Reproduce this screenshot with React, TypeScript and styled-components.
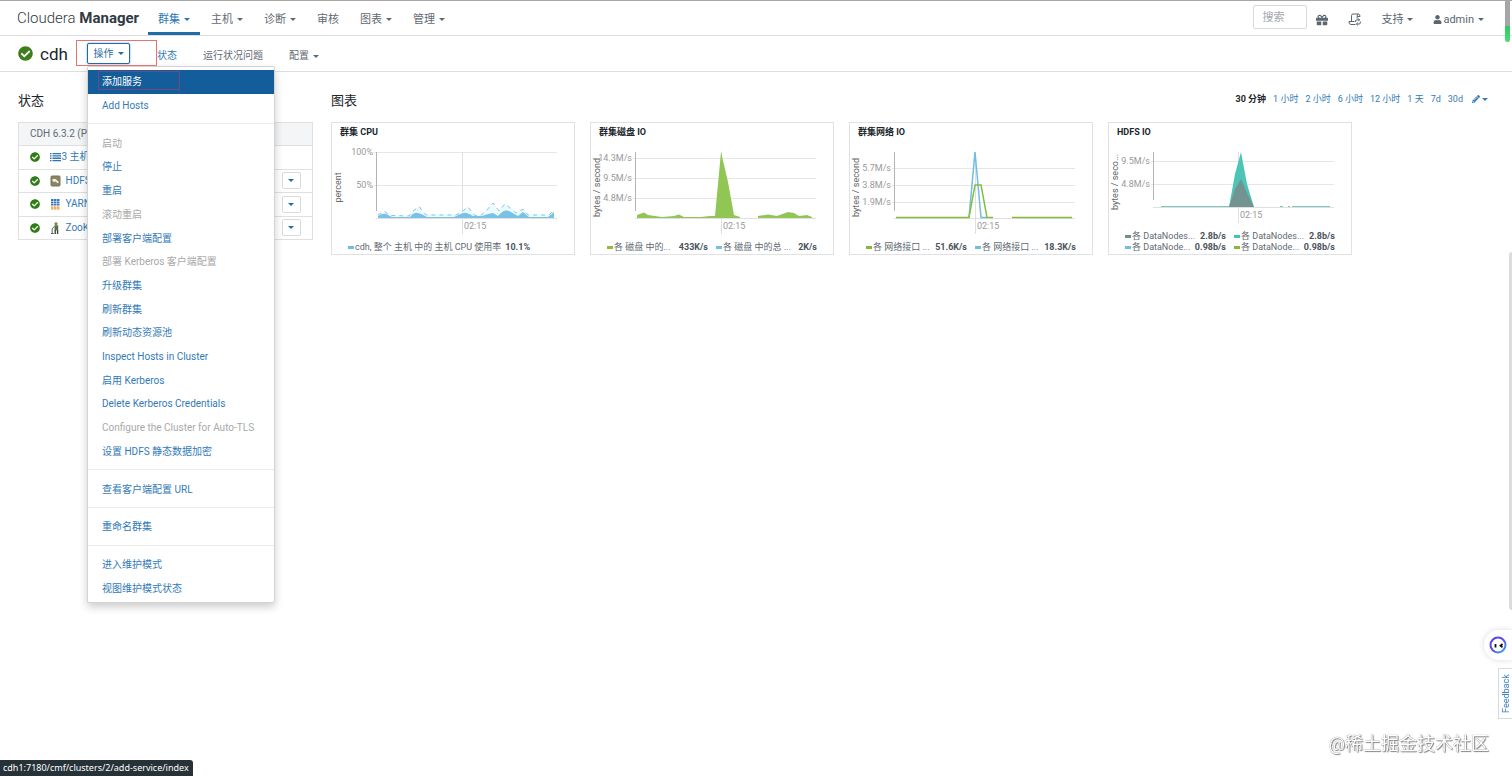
import React from 'react';
import styled, { createGlobalStyle, css } from 'styled-components';
import { FaCheckCircle, FaGift, FaUser, FaPencilAlt } from 'react-icons/fa';

const GlobalStyle = createGlobalStyle`
  * { box-sizing: border-box; }
  html, body { margin: 0; background: #fff; }
  body {
    font-family: Roboto, "Noto Sans CJK SC", sans-serif;
    font-size: 11px;
    line-height: 16px;
    color: #5f6a73;
    overflow-x: hidden;
  }
  button, input { font: inherit; color: inherit; }
  a { color: #337ab7; text-decoration: none; }
  h1, h2, h3, ul, p { margin: 0; padding: 0; font-weight: 400; }
  ul { list-style: none; }
`;

const Page = styled.div`
  position: relative;
  min-height: 100vh;
  border-top: 1px solid #a6a6a6;
`;

const TopBar = styled.header`
  display: flex;
  align-items: stretch;
  height: 35px;
  padding: 0 28px 0 17px;
  border-bottom: 1px solid #dedede;
`;

const Brand = styled.a`
  width: 131px;
  font-size: 15px;
  line-height: 35px;
  font-weight: 300;
  color: #2f3a44;
  white-space: nowrap;
  b { font-weight: 700; }
`;

const MainNav = styled.nav`
  display: flex;
  gap: 1px;
  flex: 1;
`;

const NavLink = styled.a<{ $active?: boolean }>`
  display: flex;
  align-items: center;
  gap: 4px;
  padding: 6px 10px 0;
  color: ${p => (p.$active ? '#2a76b4' : '#5f6a73')};
  border-bottom: 3px solid ${p => (p.$active ? '#1f6ca6' : 'transparent')};
`;

const Caret = styled.span`
  border: 3px solid transparent;
  border-top-color: currentColor;
  border-bottom-width: 0;
`;

const Tools = styled.div`
  display: flex;
  align-items: center;
  gap: 20px;
`;

const SearchBox = styled.input`
  width: 54px;
  height: 24px;
  margin: 0 -11px 2px 0;
  padding: 0 8px;
  border: 1px solid #d8dadc;
  border-radius: 2px;
  &::placeholder { color: #a3a8ad; }
`;

const ToolLink = styled.a`
  display: flex;
  align-items: center;
  gap: 4px;
  padding-top: 3px;
  color: #5a6670;
`;

const UserLabel = styled.span`
  display: flex;
  align-items: center;
  gap: 1px;
`;

const SubBar = styled.div`
  display: flex;
  align-items: center;
  height: 36px;
  padding-left: 18px;
  border-bottom: 1px solid #dedede;
`;

const ClusterName = styled.h1`
  display: flex;
  align-items: center;
  gap: 7px;
  width: 69px;
  font-size: 17px;
  color: #20262b;
  svg { color: #3e7d1c; font-size: 15px; }
`;

const ActionButton = styled.button`
  display: flex;
  align-items: center;
  justify-content: center;
  gap: 4px;
  width: 43px;
  height: 21px;
  padding: 0;
  font-size: 10px;
  color: #1f6ca6;
  background: #fff;
  border: 1px solid #1f6ca6;
  border-radius: 2px;
  box-shadow: 0 0 2px #5b9bd0;
`;

const SubNav = styled.nav`
  display: flex;
  gap: 26px;
  margin-left: 27px;
  padding-top: 5px;
`;

const SubLink = styled.a<{ $active?: boolean }>`
  display: flex;
  align-items: center;
  gap: 4px;
  font-size: 10px;
  color: ${p => (p.$active ? '#337ab7' : '#5f6a73')};
`;

const Content = styled.main`
  display: grid;
  grid-template-columns: 295px minmax(0, 1fr);
  gap: 18px;
  padding: 19px 24px 24px 18px;
`;

const SectionHead = styled.div`
  display: flex;
  justify-content: space-between;
  align-items: center;
  height: 20px;
  margin-bottom: 11px;
`;

const SectionTitle = styled.h2`
  font-size: 13px;
  color: #20262b;
`;

const ServiceTable = styled.table`
  width: 100%;
  height: 118px;
  border-collapse: collapse;
  border: 1px solid #e0e0e0;
  font-size: 10px;
  tr { height: 23px; border-bottom: 1px solid #e0e0e0; }
  th {
    padding: 0 11px;
    text-align: left;
    font-weight: 400;
    background: #f3f5f6;
  }
  td { padding: 0; }
`;

const StatusCell = styled.td`
  width: 31px;
  svg { display: block; margin-left: 11px; color: #2f7d14; font-size: 10px; }
`;

const ServiceLink = styled.a<{ $tight?: boolean }>`
  display: flex;
  align-items: center;
  gap: ${p => (p.$tight ? '1px' : '5px')};
`;

const MenuCell = styled.td`
  width: 37px;
`;

const RowMenu = styled.button`
  display: grid;
  place-items: center;
  width: 19px;
  height: 17px;
  margin-left: 6px;
  padding: 0;
  color: #1f6ca6;
  background: #fff;
  border: 1px solid #d8dadc;
  border-radius: 2px;
`;

const Ranges = styled.div`
  display: flex;
  align-items: center;
  gap: 7px;
  font-size: 9px;
  line-height: 12px;
  margin-top: -4px;
  b { color: #20262b; }
`;

const EditLink = styled.a`
  display: flex;
  align-items: center;
  gap: 2px;
  margin-left: 2px;
`;

const Charts = styled.div`
  display: grid;
  grid-template-columns: repeat(auto-fill, 244px);
  gap: 15px;
`;

const Panel = styled.section`
  display: flex;
  flex-direction: column;
  height: 133px;
  padding: 3px 0 1px;
  border: 1px solid #dfe1e2;
`;

const PanelTitle = styled.h3`
  margin-bottom: 1px;
  padding-left: 8px;
  font-size: 9px;
  line-height: 12px;
  font-weight: 700;
  color: #20262b;
`;

const Plot = styled.svg`
  display: block;
  width: 242px;
  flex: 1;
  min-height: 0;
  font-size: 9px;
  fill: #999;
`;

const Legend = styled.ul`
  display: grid;
  grid-template-columns: 101px 101px;
  column-gap: 8px;
  padding-left: 16px;
  font-size: 9px;
  line-height: 11px;
`;

const LegendItem = styled.li<{ $wide?: boolean }>`
  display: flex;
  align-items: center;
  white-space: nowrap;
  ${p => p.$wide && css`grid-column: 1 / -1;`}
  span { flex: ${p => (p.$wide ? 'none' : '1')}; }
  b { margin-left: 4px; color: #4a545c; }
`;

const Swatch = styled.i<{ $color: string }>`
  width: 6px;
  height: 3px;
  margin-right: 1px;
  background: ${p => p.$color};
`;

const Menu = styled.ul`
  position: absolute;
  z-index: 3;
  top: 65px;
  left: 87px;
  display: flex;
  flex-direction: column;
  width: 188px;
  height: 537px;
  padding: 3px 0 2px;
  font-size: 10px;
  background: #fff;
  border: 1px solid #d4d4d4;
  border-radius: 2px;
  box-shadow: 0 4px 8px rgba(0, 0, 0, 0.2);
`;

const MenuItem = styled.li`
  flex: 1;
  display: flex;
`;

const MenuLink = styled.a<{ $state?: 'on' | 'off' }>`
  display: flex;
  align-items: center;
  width: 100%;
  padding: 1px 0 0 14px;
  white-space: nowrap;
  color: ${p => (p.$state === 'on' ? '#fff' : p.$state === 'off' ? '#a9a9a9' : '#337ab7')};
  background: ${p => (p.$state === 'on' ? '#135d9b' : 'transparent')};
`;

const Divider = styled.li`
  height: 1px;
  margin: 6px 0 7px;
  background: #ececec;
`;

const Mark = styled.div<{ $inner?: boolean }>`
  position: absolute;
  z-index: 4;
  pointer-events: none;
  ${p => p.$inner
    ? css`top: 70px; left: 98px; width: 82px; height: 19px; border: 1px solid #6d4a80;`
    : css`top: 39px; left: 76px; width: 81px; height: 26px; border: 1px solid #e57373;`}
`;

const Watermark = styled.p`
  position: fixed;
  right: 23px;
  bottom: 19px;
  font-size: 18px;
  line-height: 26px;
  color: #fff;
  text-shadow: 0 0 1px #666, 1px 1px 1px #888;
`;

const LinkStatus = styled.div`
  position: fixed;
  left: 0;
  bottom: 0;
  height: 16px;
  padding: 0 4px 0 3px;
  font-family: "Noto Sans", sans-serif;
  font-size: 9px;
  line-height: 16px;
  color: #fff;
  background: #263238;
  border-top-right-radius: 3px;
`;

const Bot = styled.button`
  position: fixed;
  right: 0;
  bottom: 116px;
  width: 28px;
  height: 30px;
  padding: 0 0 0 5px;
  border: 0;
  border-radius: 15px 0 0 15px;
  background: #fff;
  box-shadow: 0 0 6px rgba(0, 0, 0, 0.14);
  svg { display: block; }
`;

const Feedback = styled.a`
  position: fixed;
  right: 0;
  bottom: 57px;
  width: 14px;
  height: 51px;
  writing-mode: vertical-rl;
  transform: rotate(180deg);
  text-align: center;
  font-size: 9px;
  line-height: 14px;
  background: #fff;
  border: 1px solid #d5d9dc;
  border-left: 0;
`;

const Thumb = styled.div<{ $green?: boolean }>`
  position: fixed;
  z-index: 5;
  ${p => p.$green
    ? css`top: 1px; right: 2px; width: 5px; height: 41px; border-radius: 0 0 3px 3px;
        background: linear-gradient(#a6a6a6 25px, #2fc862 25px, #4cdc78);`
    : css`top: 252px; right: 0; width: 3px; height: 358px; border-radius: 3px 0 0 3px; background: #dcdcdc;`}
`;

const ScriptIcon = () => (
  <svg width="13" height="13" viewBox="0 0 13 13" fill="none" stroke="#5a6670" strokeWidth="1">
    <path d="M3.5 8.5V2.5Q3.5 1 5 1H10.5Q9.2 1.2 9.2 3V5.5M10.5 1Q12 1.2 12 3.5H9.3M6.5 8.5H1Q.8 11.5 3 11.5H7.5" />
    <path d="M7.5 9V8Q7.5 6.8 9 6.8H11.5M10.2 5.5L11.7 6.8 10.2 8M12.3 8.5V10Q12.3 11 11 11H8.5M9.8 9.6L8.3 11 9.8 12.4" />
  </svg>
);

const ListIcon = () => (
  <svg width="11" height="10" viewBox="0 0 11 10" fill="#2a76b4">
    <path d="M0 1h1.500v1.300H0zM0 3.300h1.500v1.300H0zM0 5.600h1.500v1.300H0zM0 7.900h1.500v1.300H0z" />
    <path d="M2.500 1H11v1.300H2.500zM2.500 3.300H11v1.300H2.500zM2.500 5.600H11v1.300H2.500zM2.500 7.900H11v1.300H2.500z" />
  </svg>
);

const HdfsIcon = () => (
  <svg width="11" height="12" viewBox="0 0 11 12">
    <rect x="1" y="1" width="9" height="10" rx="1" fill="#8b8565" stroke="#77725a" />
    <path d="M2.500 4L5.500 4 8.500 6.500 8.500 8H7L6 6.500 4 7 2.500 6Z" fill="#f1eedf" />
  </svg>
);

const YarnIcon = () => (
  <svg width="11" height="11" viewBox="0 0 11 11">
    {[1, 4, 7].map(x => (
      <g key={x}>
        <path fill="#3d78c4" d={`M${x} 0h2.500v2h-2.500zM${x} 2.500h2.500v2h-2.500zM${x} 5h2.500v1.500h-2.500z`} />
        <path fill="#f0923b" d={`M${x} 7.500h2.500v1.200h-2.500zM${x} 9.300h2.500v1.200h-2.500z`} />
      </g>
    ))}
  </svg>
);

const ZooIcon = () => (
  <svg width="11" height="12" viewBox="0 0 11 12">
    <circle cx="6" cy="1.800" r="1.600" fill="#8a7a50" />
    <path d="M4.500 3.300h3.700v5h-3.700z" fill="#55704a" />
    <path d="M5.200 8V12M7.600 8V12" stroke="#3c4638" strokeWidth="1.400" />
    <path d="M4.500 4.500L2.200 6.500V11M1 11.500H3.800" stroke="#695f4e" fill="none" />
  </svg>
);

type Tick = [number, string];

interface ChartSpec {
  title: string;
  unit: string;
  base: number;
  ticks: Tick[];
  timeX: number;
  drawing: React.ReactNode;
  legend: { color: string; name: string; value: string }[];
}

const AXIS_X = 44;
const PLOT_TOP = 13;

const cpuPeak =
  'M46 76L52 72 58 76.500 77 77 80 73 87 67.500 94 76 124 76 131 72 136 68 142 76 148 77 154 72 161 64 167 72 173 65 178 69 184 74 191 70 196 76 217 76 222 71';

const charts: ChartSpec[] = [
  {
    title: '群集 CPU', unit: 'percent', base: 79, timeX: 130,
    ticks: [[13, '100%'], [46, '50%']],
    drawing: (
      <>
        <path fill="#edfaff" d={`${cpuPeak}V79H46Z`} />
        <path fill="none" stroke="#7cc5d8" strokeDasharray="4 4" d={cpuPeak} />
        <path fill="#78c2e8" d="M46 77Q52 73 56 76L60 78H78Q82 73 86 74T95 78H122Q128 75 131 74T141 77H150Q155 75 161 74L166 77Q172 69 178 72.500L186 77 191 73 197 78H216L222 73V79H46Z" />
      </>
    ),
    legend: [{ color: '#70bde6', name: 'cdh, 整个 主机 中的 主机 CPU 使用率', value: '10.1%' }],
  },
  {
    title: '群集磁盘 IO', unit: 'bytes / second', base: 79, timeX: 130,
    ticks: [[19, '14.3M/s'], [39, '9.5M/s'], [59, '4.8M/s']],
    drawing: <path fill="#91c654" d="M46 79V76L53 73.500 57 76 71 78 83 77 88 75.500 93 78 110 78 119 77 124 77 130 13 137 43 143 76 149 78V79ZM167 79V77L177 75.500 186 77 197 73 203 74 208 77 216 76 221 78V79Z" />,
    legend: [
      { color: '#97b83d', name: '各 磁盘 中的...', value: '433K/s' },
      { color: '#70c2e6', name: '各 磁盘 中的总 ...', value: '2K/s' },
    ],
  },
  {
    title: '群集网络 IO', unit: 'bytes / second', base: 79, timeX: 125,
    ticks: [[29, '5.7M/s'], [46, '3.8M/s'], [63, '1.9M/s']],
    drawing: (
      <g fill="none" strokeWidth="1.500">
        <path stroke="#70bde6" d="M119 78.500L125 13 131 78.500H137" />
        <path stroke="#87bd3f" d="M46 78.500H119L125 46H131L137 78.500H143M162 78.500H222" />
      </g>
    ),
    legend: [
      { color: '#82b83d', name: '各 网络接口 ...', value: '51.6K/s' },
      { color: '#70bde6', name: '各 网络接口 ...', value: '18.3K/s' },
    ],
  },
  {
    title: 'HDFS IO', unit: 'bytes / seco...', base: 68, timeX: 129,
    ticks: [[22, '9.5M/s'], [45, '4.8M/s']],
    drawing: (
      <>
        <path fill="#4cc5b8" d="M120 68L126 35 132 13 138 45 145 68Z" />
        <path fill="#72938f" d="M120 68L126 50 132 40 138 54 145 68Z" />
        <path stroke="#7bc9c0" d="M52 67.500H120M171 67.500H174M179 67.500H181M183 67.500H221" />
      </>
    ),
    legend: [
      { color: '#6b938a', name: '各 DataNodes...', value: '2.8b/s' },
      { color: '#3fc5b8', name: '各 DataNodes...', value: '2.8b/s' },
      { color: '#70bde6', name: '各 DataNode...', value: '0.98b/s' },
      { color: '#87b83d', name: '各 DataNode...', value: '0.98b/s' },
    ],
  },
];

const ChartPanel = ({ spec }: { spec: ChartSpec }) => {
  const { base, timeX } = spec;
  return (
    <Panel>
      <PanelTitle>{spec.title}</PanelTitle>
      <Plot viewBox={`0 0 242 ${base + 21}`} preserveAspectRatio="xMinYMin meet">
        {spec.ticks.map(([y, label]) => (
          <g key={label}>
            <path stroke="#e6e6e6" d={`M${AXIS_X - 2} ${y + 0.5}H225`} />
            <text x={AXIS_X - 3} y={y + 3} textAnchor="end">{label}</text>
          </g>
        ))}
        <path stroke="#e0e0e0" d={`M${AXIS_X} ${base + 0.5}H225M${timeX + 0.5} ${PLOT_TOP}V${base + 16}`} />
        <path stroke="#b4b4b4" d={`M${AXIS_X + 0.5} ${PLOT_TOP}V${base - 7}`} />
        {spec.drawing}
        <text x={timeX + 2} y={base + 11}>02:15</text>
        <text transform={`translate(9 ${(base + 16) / 2 + 1}) rotate(-90)`} textAnchor="middle" fill="#666">{spec.unit}</text>
      </Plot>
      <Legend>
        {spec.legend.map((l, i) => (
          <LegendItem key={i} $wide={spec.legend.length === 1}>
            <Swatch $color={l.color} />
            <span>{l.name}</span>
            <b>{l.value}</b>
          </LegendItem>
        ))}
      </Legend>
    </Panel>
  );
};

const menuGroups: { label: string; state?: 'on' | 'off' }[][] = [
  [{ label: '添加服务', state: 'on' }, { label: 'Add Hosts' }],
  [
    { label: '启动', state: 'off' },
    { label: '停止' },
    { label: '重启' },
    { label: '滚动重启', state: 'off' },
    { label: '部署客户端配置' },
    { label: '部署 Kerberos 客户端配置', state: 'off' },
    { label: '升级群集' },
    { label: '刷新群集' },
    { label: '刷新动态资源池' },
    { label: 'Inspect Hosts in Cluster' },
    { label: '启用 Kerberos' },
    { label: 'Delete Kerberos Credentials' },
    { label: 'Configure the Cluster for Auto-TLS', state: 'off' },
    { label: '设置 HDFS 静态数据加密' },
  ],
  [{ label: '查看客户端配置 URL' }],
  [{ label: '重命名群集' }],
  [{ label: '进入维护模式' }, { label: '视图维护模式状态' }],
];

const navItems = ['群集', '主机', '诊断', '审核', '图表', '管理'];
const services = [
  { name: 'HDFS', icon: <HdfsIcon /> },
  { name: 'YARN', icon: <YarnIcon /> },
  { name: 'ZooKeeper', icon: <ZooIcon /> },
];
const ranges = ['1 小时', '2 小时', '6 小时', '12 小时', '1 天', '7d', '30d'];

export default function App() {
  return (
    <Page>
      <GlobalStyle />
      <TopBar>
        <Brand href="#">Cloudera <b>Manager</b></Brand>
        <MainNav>
          {navItems.map((n, i) => (
            <NavLink href="#" key={n} $active={i === 0}>
              {n}{n !== '审核' && <Caret />}
            </NavLink>
          ))}
        </MainNav>
        <Tools>
          <SearchBox aria-label="搜索" placeholder="搜索" />
          <ToolLink href="#" aria-label="Parcels"><FaGift size={12} /></ToolLink>
          <ToolLink href="#" aria-label="Commands"><ScriptIcon /></ToolLink>
          <ToolLink href="#">支持<Caret /></ToolLink>
          <ToolLink href="#">
            <UserLabel><FaUser size={9} />admin</UserLabel><Caret />
          </ToolLink>
        </Tools>
      </TopBar>

      <SubBar>
        <ClusterName><FaCheckCircle />cdh</ClusterName>
        <ActionButton aria-expanded="true">操作<Caret /></ActionButton>
        <SubNav>
          <SubLink href="#" $active>状态</SubLink>
          <SubLink href="#">运行状况问题</SubLink>
          <SubLink href="#">配置<Caret /></SubLink>
        </SubNav>
      </SubBar>

      <Content>
        <section>
          <SectionHead><SectionTitle>状态</SectionTitle></SectionHead>
          <ServiceTable>
            <thead>
              <tr><th colSpan={3}>CDH 6.3.2 (Parcel)</th></tr>
            </thead>
            <tbody>
              <tr>
                <StatusCell><FaCheckCircle /></StatusCell>
                <td><ServiceLink href="#" $tight><ListIcon />3 主机</ServiceLink></td>
                <MenuCell />
              </tr>
              {services.map(s => (
                <tr key={s.name}>
                  <StatusCell><FaCheckCircle /></StatusCell>
                  <td><ServiceLink href="#">{s.icon}{s.name}</ServiceLink></td>
                  <MenuCell><RowMenu aria-label={s.name}><Caret /></RowMenu></MenuCell>
                </tr>
              ))}
            </tbody>
          </ServiceTable>
        </section>
        <section>
          <SectionHead>
            <SectionTitle>图表</SectionTitle>
            <Ranges>
              <b>30 分钟</b>
              {ranges.map(r => <a href="#" key={r}>{r}</a>)}
              <EditLink href="#" aria-label="Edit"><FaPencilAlt size={8} /><Caret /></EditLink>
            </Ranges>
          </SectionHead>
          <Charts>
            {charts.map(c => <ChartPanel key={c.title} spec={c} />)}
          </Charts>
        </section>
      </Content>

      <Menu>
        {menuGroups.map((group, g) => (
          <React.Fragment key={g}>
            {g > 0 && <Divider />}
            {group.map(item => (
              <MenuItem key={item.label}>
                <MenuLink href="#" $state={item.state}>{item.label}</MenuLink>
              </MenuItem>
            ))}
          </React.Fragment>
        ))}
      </Menu>
      <Mark />
      <Mark $inner />

      <Thumb $green />
      <Thumb />
      <Bot aria-label="Assistant">
        <svg width="18" height="18" viewBox="0 0 18 18">
          <defs>
            <linearGradient id="ring" x1="0" y1="0" x2="1" y2="1">
              <stop offset="0" stopColor="#5b3df0" />
              <stop offset="0.5" stopColor="#5a50e8" />
              <stop offset="1" stopColor="#35b3f2" />
            </linearGradient>
          </defs>
          <circle cx="9" cy="9" r="7.500" fill="#fff" stroke="url(#ring)" strokeWidth="2" />
          <path d="M6.500 8V11.500M13.500 8L11.500 9.700 13.500 11.300" fill="none" stroke="#111" strokeWidth="1.800" />
        </svg>
      </Bot>
      <Feedback href="#">Feedback</Feedback>
      <Watermark>@稀土掘金技术社区</Watermark>
      <LinkStatus>cdh1:7180/cmf/clusters/2/add-service/index</LinkStatus>
    </Page>
  );
}
